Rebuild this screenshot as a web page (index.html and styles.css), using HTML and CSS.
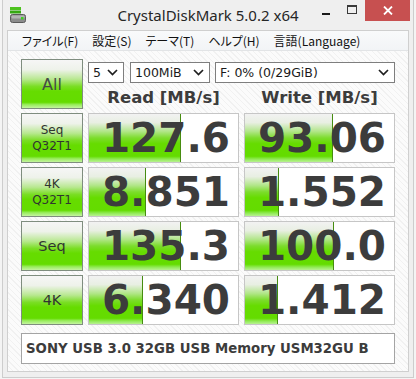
FILE: index.html
```html
<!DOCTYPE html>
<html lang="ja">
<head>
<meta charset="utf-8">
<title>CrystalDiskMark 5.0.2 x64</title>
<link rel="stylesheet" href="styles.css">
</head>
<body>
<div class="window">
  <div class="titlebar">
    <div class="tb-left">
      <svg class="app-icon" width="16" height="16" viewBox="0 0 16 16">
        <rect x="0" y="0" width="11" height="3" fill="#4cc21e"/>
        <rect x="0" y="3.5" width="11" height="3" fill="#36a812"/>
        <rect x="0.5" y="7.5" width="15" height="8" rx="2" fill="#8c8c8c" stroke="#5a5a5a"/>
        <rect x="1.5" y="8.5" width="13" height="3" rx="1" fill="#b4b4b4"/>
        <rect x="11" y="10" width="2.5" height="2.5" fill="#3cd020"/>
      </svg>
    </div>
    <div class="title">CrystalDiskMark 5.0.2 x64</div>
    <div class="caption-buttons">
      <div class="cb cb-min"><span class="min-bar"></span></div>
      <div class="cb cb-max"><span class="max-box"></span></div>
      <div class="cb cb-close">
        <svg width="10" height="9" viewBox="0 0 10 9"><path d="M1 0.5 L9 8.5 M9 0.5 L1 8.5" stroke="#fff" stroke-width="1.8"/></svg>
      </div>
    </div>
  </div>
  <div class="frame">
    <div class="menubar">
      <span class="menu-item">ファイル(F)</span>
      <span class="menu-item">設定(S)</span>
      <span class="menu-item">テーマ(T)</span>
      <span class="menu-item">ヘルプ(H)</span>
      <span class="menu-item">言語(Language)</span>
    </div>
    <div class="client">
      <div class="top">
        <div class="btn btn-all">All</div>
        <div class="top-right">
          <div class="selects">
            <div class="select sel-count"><span>5</span><svg class="chev" width="11" height="7" viewBox="0 0 11 7"><polyline points="1,1 5.5,5.5 10,1" fill="none" stroke="#1e1e1e" stroke-width="1.7"/></svg></div>
            <div class="select sel-size"><span>100MiB</span><svg class="chev" width="11" height="7" viewBox="0 0 11 7"><polyline points="1,1 5.5,5.5 10,1" fill="none" stroke="#1e1e1e" stroke-width="1.7"/></svg></div>
            <div class="select sel-drive"><span>F: 0% (0/29GiB)</span><svg class="chev" width="11" height="7" viewBox="0 0 11 7"><polyline points="1,1 5.5,5.5 10,1" fill="none" stroke="#1e1e1e" stroke-width="1.7"/></svg></div>
          </div>
          <div class="headers">
            <div class="hdr">Read [MB/s]</div>
            <div class="hdr">Write [MB/s]</div>
          </div>
        </div>
      </div>
      <div class="rows">
        <div class="row">
          <div class="btn btn-label">Seq<br>Q32T1</div>
          <div class="cell" style="--w:92px">127.6</div>
          <div class="cell" style="--w:88px">93.06</div>
        </div>
        <div class="row">
          <div class="btn btn-label">4K<br>Q32T1</div>
          <div class="cell" style="--w:57px">8.851</div>
          <div class="cell" style="--w:34px">1.552</div>
        </div>
        <div class="row">
          <div class="btn btn-label btn-big">Seq</div>
          <div class="cell" style="--w:92px">135.3</div>
          <div class="cell" style="--w:89px">100.0</div>
        </div>
        <div class="row">
          <div class="btn btn-label btn-big">4K</div>
          <div class="cell" style="--w:54px">6.340</div>
          <div class="cell" style="--w:33px">1.412</div>
        </div>
      </div>
      <div class="comment">SONY USB 3.0 32GB USB Memory USM32GU B</div>
    </div>
  </div>
</div>
</body>
</html>
```
FILE: styles.css
```css
* { box-sizing: border-box; }
html, body { margin: 0; padding: 0; }
body {
  width: 416px;
  height: 379px;
  overflow: hidden;
  background: #f4f4f4;
  font-family: "DejaVu Sans", sans-serif;
  color: #3c3c3c;
}
.window {
  margin: 0 2px;
  width: 412px;
  height: 378px;
  border: 1px solid #cdcdcd;
  border-top: none;
  background: #efefef;
  display: flex;
  flex-direction: column;
}
.titlebar {
  height: 30px;
  display: grid;
  grid-template-columns: 1fr auto 1fr;
  align-items: start;
}
.tb-left { padding: 7px 0 0 7px; }
.app-icon { display: block; }
.title {
  font-family: "Noto Sans", sans-serif;
  font-size: 15px;
  line-height: 20px;
  padding-top: 5px;
  color: #262626;
  white-space: nowrap;
}
.caption-buttons {
  justify-self: end;
  display: flex;
  padding-right: 3px;
}
.cb {
  height: 21px;
  display: flex;
  align-items: center;
  justify-content: center;
}
.cb-min { width: 27px; }
.cb-max { width: 26px; }
.cb-close { width: 45px; background: #c75050; }
.min-bar {
  display: block;
  width: 8px;
  height: 2px;
  margin-top: 6px;
  background: #1a1a1a;
}
.max-box {
  display: block;
  width: 10px;
  height: 9px;
  margin-top: -2px;
  border: 1px solid #3a3a3a;
  border-top-width: 2px;
}
.frame {
  margin: 0 4px;
  height: 342px;
  border: 1px solid #cfcfcf;
  display: flex;
  flex-direction: column;
}
.menubar {
  height: 20px;
  display: flex;
  align-items: center;
  padding-left: 7px;
  background: linear-gradient(#f9fafb, #f2f4f6);
  border-bottom: 1px solid #e2e4e6;
  font-family: "Noto Sans CJK JP", sans-serif;
  font-feature-settings: "palt";
  font-size: 12px;
  color: #111;
}
.menu-item { padding: 0 7px; white-space: nowrap; }
.client {
  flex: 1;
  padding: 8px 13px 0 13px;
  background: repeating-linear-gradient(45deg, #fbfbfb 0 3px, #f1f1f1 3px 4px);
}
.top { display: flex; gap: 5px; height: 50px; }
.btn {
  border: 1px solid #7f8d7f;
  background: linear-gradient(to bottom, #f6f6f6 0%, #eef2ea 20%, #b8e890 40%, #7ade24 55%, #66dc00 65%, #64dc00 88%, #98ec5c 93%, #c4f4a0 100%);
  color: #303530;
  display: flex;
  align-items: center;
  justify-content: center;
  text-align: center;
}
.btn-all { width: 62px; height: 50px; font-size: 16px; color: #454a45; }
.top-right { width: 307px; display: flex; flex-direction: column; }
.selects { display: flex; margin-top: 3px; height: 21px; }
.select {
  height: 21px;
  border: 1px solid #7e7e7e;
  background: #fff;
  display: flex;
  align-items: center;
  justify-content: space-between;
  padding: 0 5px 0 4px;
  font-size: 12.5px;
  color: #1a1a1a;
  white-space: nowrap;
}
.sel-count { width: 36px; }
.sel-size { width: 80px; margin-left: 6px; }
.sel-drive { width: 180px; margin-left: 5px; }
.chev { display: block; }
.headers { display: flex; gap: 5px; margin-top: 3px; }
.hdr {
  width: 151px;
  text-align: center;
  font-weight: bold;
  font-size: 16.5px;
  line-height: 23px;
  color: #3c3c3c;
}
.rows { display: flex; flex-direction: column; gap: 4px; margin-top: 4px; }
.row { display: flex; gap: 5px; height: 50px; }
.btn-label { width: 62px; font-size: 12px; line-height: 16.5px; }
.btn-big { font-size: 14.5px; }
.cell {
  width: 151px;
  border: 1px solid #c6c6c6;
  background-color: #fff;
  background-image:
    linear-gradient(#468c10, #468c10),
    linear-gradient(to bottom, #f2f2f2 0%, #e8efe2 18%, #b2e68a 36%, #7cdc2c 50%, #66dc00 62%, #64dc00 88%, #90ea54 94%, #b8f292 100%);
  background-repeat: no-repeat;
  background-size: 1px 100%, var(--w) 100%;
  background-position: calc(var(--w) - 1px) 0, 0 0;
  display: flex;
  align-items: center;
  justify-content: flex-end;
  padding-right: 8px;
  font-weight: bold;
  font-size: 40.5px;
  color: #3c3c3c;
}
.comment {
  margin-top: 8px;
  height: 31px;
  width: 374px;
  border: 1px solid #a4a4a4;
  background: #fff;
  display: flex;
  align-items: center;
  padding-left: 4px;
  font-weight: bold;
  font-size: 13.3px;
  color: #3c3c3c;
  white-space: nowrap;
}
```
